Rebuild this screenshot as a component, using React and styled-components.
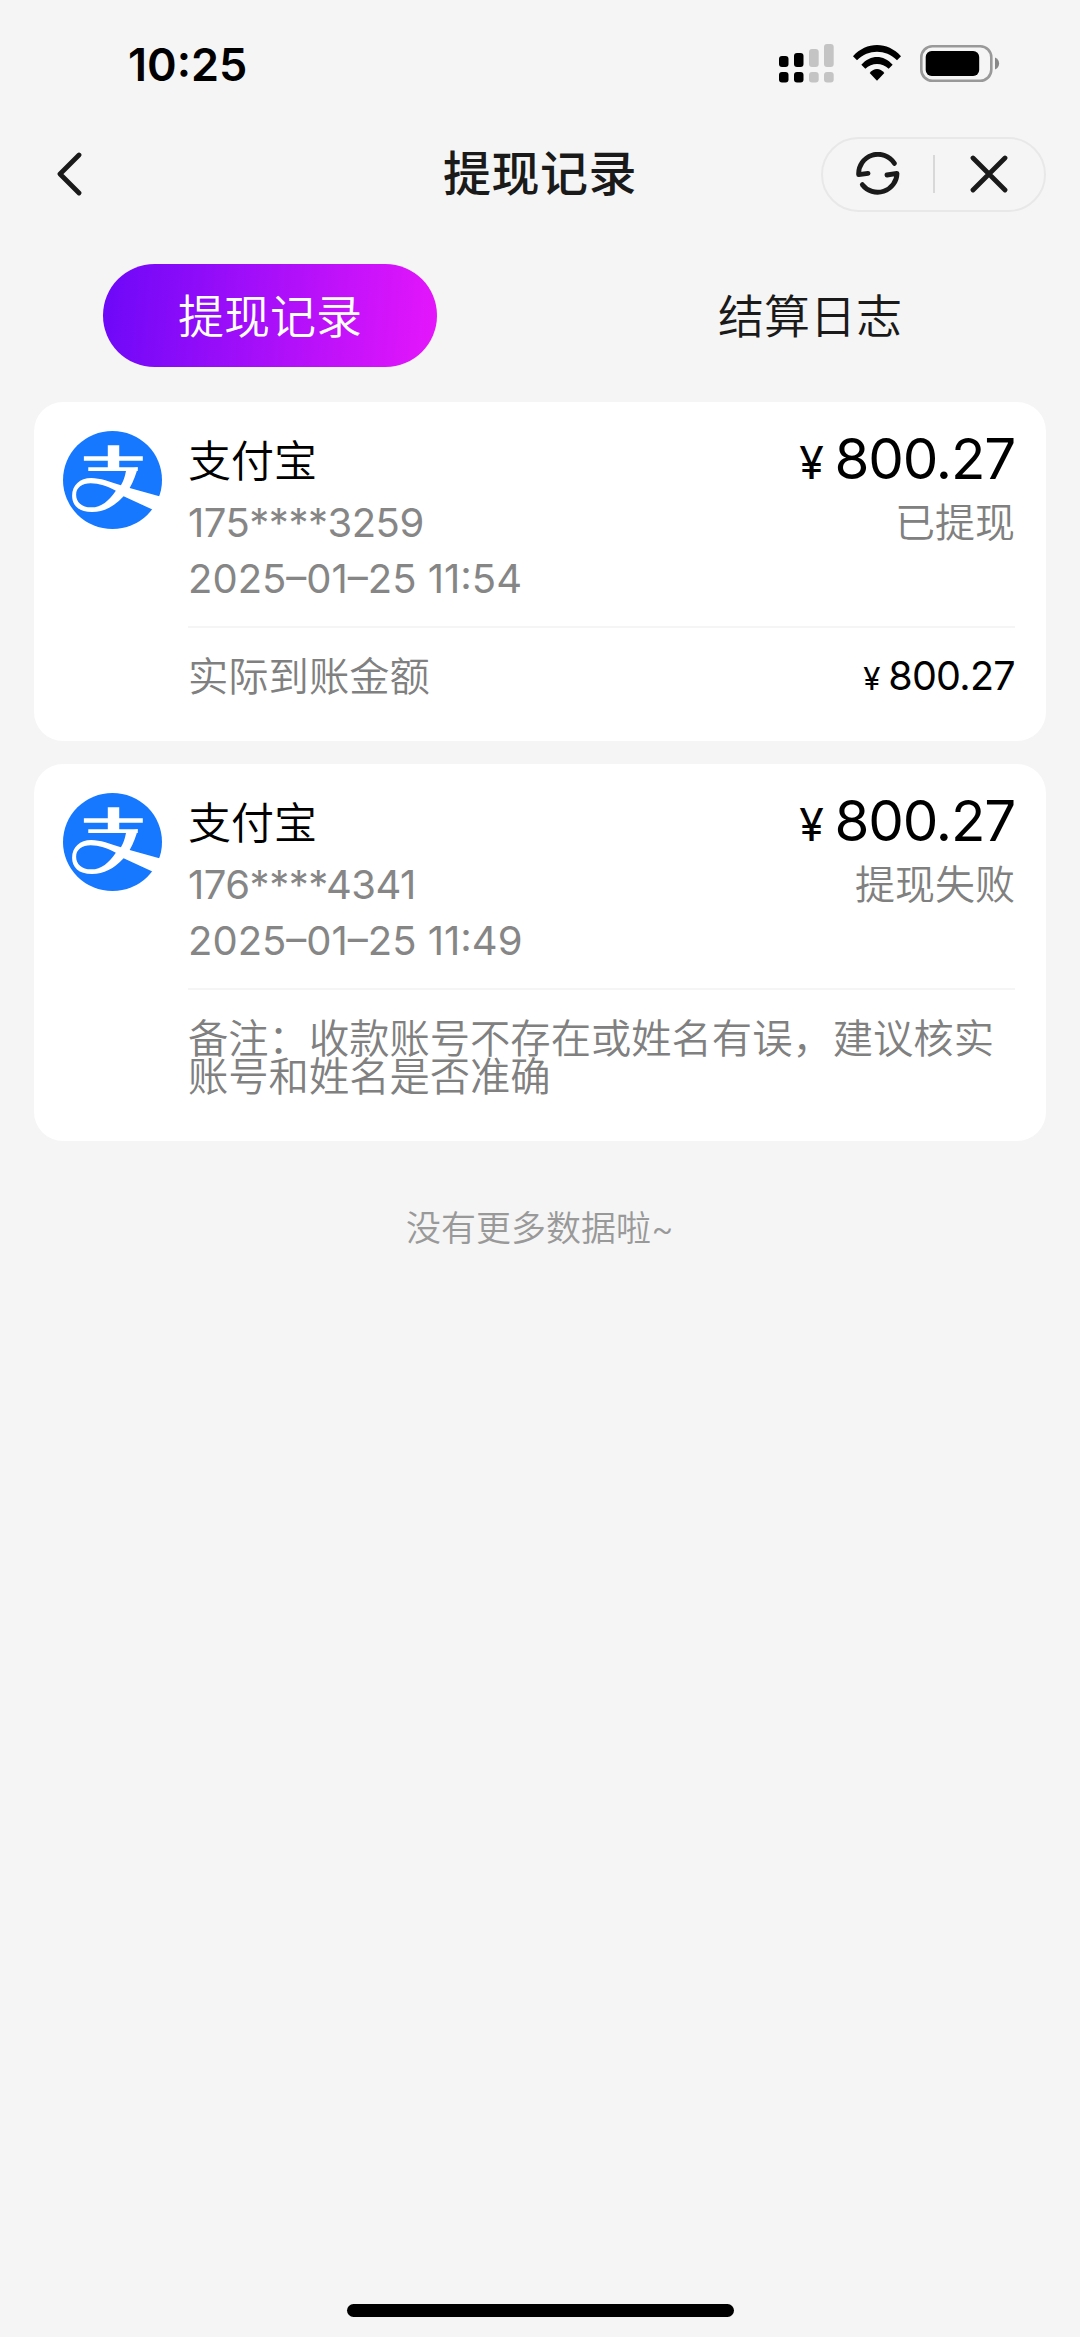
import React, { Component } from 'react'
import styled, { createGlobalStyle } from 'styled-components'

const GlobalStyle = createGlobalStyle`
  * {
    box-sizing: border-box;
  }
  body {
    margin: 0;
    background: #f5f5f5;
    font-family: Inter, "Noto Sans CJK SC", sans-serif;
    font-weight: 350;
  }
`

const RECORDS = [
  {
    id: 1,
    channel: '支付宝',
    account: '175****3259',
    date: '2025–01–25 11:54',
    amount: '800.27',
    status: '已提现',
    received: '800.27',
  },
  {
    id: 2,
    channel: '支付宝',
    account: '176****4341',
    date: '2025–01–25 11:49',
    amount: '800.27',
    status: '提现失败',
    remark: '收款账号不存在或姓名有误，建议核实账号和姓名是否准确',
  },
]

const Screen = styled.div`
  display: flex;
  flex-direction: column;
  width: 1080px;
  height: 2337px;
  background: #f5f5f5;
`

const StatusBar = styled.div`
  display: flex;
  align-items: center;
  justify-content: space-between;
  height: 130px;
  padding: 0 80px 0 128px;
`

const Clock = styled.span`
  font-size: 45px;
  font-weight: 600;
  line-height: 60px;
  color: #000;
`

const StatusIcons = styled.div`
  display: flex;
  align-items: center;
  gap: 19px;
  padding-bottom: 4px;
`

const NavBar = styled.div`
  display: grid;
  grid-template-columns: 1fr auto 1fr;
  align-items: center;
  height: 88px;
  padding: 0 34px 0 57px;
`

const BackButton = styled.button`
  display: flex;
  padding: 0;
  border: 0;
  background: none;
`

const NavTitle = styled.h1`
  margin: 0;
  padding-right: 23px;
  font-size: 48px;
  font-weight: 500;
  line-height: 60px;
  letter-spacing: 0.5px;
  color: #1a1a1a;
`

const Capsule = styled.div`
  display: flex;
  align-items: center;
  justify-self: end;
  width: 225px;
  height: 75px;
  border: 2px solid #e8e8e8;
  border-radius: 38px;
`

const CapsuleItem = styled.div`
  display: flex;
  flex: 1;
  justify-content: center;

  & + & {
    border-left: 2px solid #d8d8d8;
  }
`

const Tabs = styled.div`
  display: grid;
  grid-template-columns: 1fr 1fr;
  justify-items: center;
  padding: 46px 0 35px;
`

const Tab = styled.div`
  width: 334px;
  height: 103px;
  border-radius: 52px;
  font-size: 46px;
  line-height: 105px;
  text-align: center;
  color: ${({ $active }) => ($active ? '#fff' : '#1a1a1a')};
  background: ${({ $active }) => ($active ? 'linear-gradient(95deg, #6c08f8, #e616fb)' : 'none')};
`

const List = styled.div`
  display: flex;
  flex-direction: column;
  gap: 23px;
  padding: 0 34px;
`

const Card = styled.div`
  display: flex;
  gap: 26px;
  padding: 29px 31px 45px 29px;
  border-radius: 29px;
  background: #fff;
`

const CardBody = styled.div`
  flex: 1;
`

const Summary = styled.div`
  display: flex;
  justify-content: space-between;
  height: 197px;
  border-bottom: 2px solid #f5f5f5;
`

const Column = styled.div`
  display: flex;
  flex-direction: column;
  align-items: ${({ $end }) => ($end ? 'flex-end' : 'flex-start')};
`

const Channel = styled.div`
  margin-bottom: 4px;
  font-size: 43px;
  line-height: 60px;
  color: #000;
`

const Line = styled.div`
  font-size: 40px;
  font-weight: ${({ $digits }) => ($digits ? 400 : 350)};
  line-height: 55.5px;
  letter-spacing: ${({ $spacing }) => $spacing || 0};
  color: ${({ $digits }) => ($digits ? '#868686' : '#808080')};
`

const Price = styled.div`
  height: ${({ $large }) => ($large ? '57px' : '38px')};
  margin-bottom: ${({ $large }) => ($large ? '7px' : 0)};
  font-size: ${({ $large }) => ($large ? '56.5px' : '39.5px')};
  font-weight: 400;
  line-height: ${({ $large }) => ($large ? '55px' : '36px')};
  letter-spacing: ${({ $large }) => ($large ? '-0.021em' : '-0.018em')};
  color: #000;
`

const Yen = styled.span`
  margin-right: 0.27em;
  font-size: 0.79em;
  line-height: 1;
`

const Detail = styled.div`
  display: flex;
  justify-content: space-between;
  margin-top: 30px;
  font-size: 40.3px;
  line-height: 37.8px;
  color: #808080;
`

const NoMore = styled.div`
  margin-top: 62px;
  font-size: 35px;
  line-height: 50px;
  text-align: center;
  color: #999;
`

const HomeIndicator = styled.div`
  width: 387px;
  height: 13px;
  margin: auto auto 20px;
  border-radius: 7px;
  background: #000;
`

const SignalIcon = () => (
  <svg width="55" height="39" viewBox="0 0 55 39">
    <g fill="#000">
      <rect x="0" y="12" width="9.5" height="11" rx="3" />
      <rect x="15" y="9" width="9.5" height="14" rx="3" />
      <rect x="0" y="28" width="9.5" height="10.5" rx="3" />
      <rect x="15" y="28" width="9.5" height="10.5" rx="3" />
    </g>
    <g fill="#c4c4c4">
      <rect x="30" y="5" width="9.7" height="18" rx="3" />
      <rect x="45" y="0" width="9.7" height="23" rx="3" />
      <rect x="30" y="28" width="9.7" height="10.5" rx="3" />
      <rect x="45" y="28" width="9.7" height="10.5" rx="3" />
    </g>
  </svg>
)

const WifiIcon = () => (
  <svg width="48" height="36" viewBox="0 0 144 108">
    <path d="M0 34C40 -11 104 -11 144 34L132 46C97 12 47 12 12 46Z" />
    <path d="M25 59C53 28 91 28 119 59L107 71C88 52 56 52 37 71Z" />
    <path d="M50 84C63 68 81 68 94 84L72 107Z" />
  </svg>
)

const BatteryIcon = () => (
  <svg width="80" height="37" viewBox="0 0 80 37">
    <rect x="1.3" y="1.3" width="70" height="34.4" rx="11" fill="none" stroke="#999" strokeWidth="2.6" />
    <rect x="5.7" y="6" width="53.5" height="25" rx="6" />
    <path d="M75 12.5C80.5 14.5 80.5 22.5 75 24.5Z" fill="#888" />
  </svg>
)

const BackIcon = () => (
  <svg width="25" height="44" viewBox="0 0 25 44" fill="none" stroke="#1a1a1a" strokeWidth="4.8" strokeLinecap="round" strokeLinejoin="round">
    <path d="M22 3L3 22L22 41" />
  </svg>
)

const RefreshIcon = () => (
  <svg width="44" height="44" viewBox="0 0 132 132" fill="none" stroke="#1a1a1a" strokeWidth="14.5" strokeLinecap="round" strokeLinejoin="round">
    <path d="M115 34A58 58 0 0 0 8 68L36 64" />
    <path d="M19 98A58 58 0 0 0 123 64L93 69" />
  </svg>
)

const CloseIcon = () => (
  <svg width="38" height="38" viewBox="0 0 38 38" stroke="#1a1a1a" strokeWidth="4.8" strokeLinecap="round">
    <path d="M3 3L35 35M35 3L3 35" />
  </svg>
)

const AlipayIcon = () => (
  <svg width="99" height="98" viewBox="0 0 294 294" preserveAspectRatio="none">
    <circle cx="147" cy="147" r="147" fill="#1677ff" />
    <g fill="#fff">
      <path d="M133 43h34v33h70v13h-70v20h55v11H75v-11h58V89H62V76h71Z" />
      <path
        fillRule="evenodd"
        d="M222 109C217 130 210 150 198 171L294 198L267 236L180 196C150 228 122 243 86 243C46 243 27 222 27 194C27 163 50 141 84 141C110 141 140 152 172 163C179 152 184 138 188 115ZM157 179C135 210 115 229 84 229C55 229 39 213 39 191C39 170 57 157 82 157C108 157 130 166 157 179Z"
      />
    </g>
  </svg>
)

/*
  @PROPS:
    record : {
      channel, account, date, amount, status,
      received (paid out) or remark (failed)
    },
*/
class RecordCard extends Component {
  render = () => {
    const { record } = this.props
    return (
      <Card>
        <AlipayIcon />
        <CardBody>
          <Summary>
            <Column>
              <Channel>{record.channel}</Channel>
              <Line $digits $spacing="-0.5px">{record.account}</Line>
              <Line $digits>{record.date}</Line>
            </Column>
            <Column $end>
              <Price $large><Yen>¥</Yen>{record.amount}</Price>
              <Line>{record.status}</Line>
            </Column>
          </Summary>
          {record.received ? (
            <Detail>
              <span>实际到账金额</span>
              <Price><Yen>¥</Yen>{record.received}</Price>
            </Detail>
          ) : (
            <Detail>备注：{record.remark}</Detail>
          )}
        </CardBody>
      </Card>
    )
  }
}

class App extends Component {
  state = {
    tab: 'records', // records - settlement
  }

  handleTab = (tab) => this.setState({ tab })

  render = () => {
    const { tab } = this.state
    return (
      <Screen>
        <GlobalStyle />
        <StatusBar>
          <Clock>10:25</Clock>
          <StatusIcons>
            <SignalIcon />
            <WifiIcon />
            <BatteryIcon />
          </StatusIcons>
        </StatusBar>
        <NavBar>
          <BackButton><BackIcon /></BackButton>
          <NavTitle>提现记录</NavTitle>
          <Capsule>
            <CapsuleItem><RefreshIcon /></CapsuleItem>
            <CapsuleItem><CloseIcon /></CapsuleItem>
          </Capsule>
        </NavBar>
        <Tabs>
          <Tab $active={tab === 'records'} onClick={() => this.handleTab('records')}>提现记录</Tab>
          <Tab $active={tab === 'settlement'} onClick={() => this.handleTab('settlement')}>结算日志</Tab>
        </Tabs>
        <List>
          {RECORDS.map((record) => <RecordCard key={record.id} record={record} />)}
        </List>
        <NoMore>没有更多数据啦~</NoMore>
        <HomeIndicator />
      </Screen>
    )
  }
}

export default App
